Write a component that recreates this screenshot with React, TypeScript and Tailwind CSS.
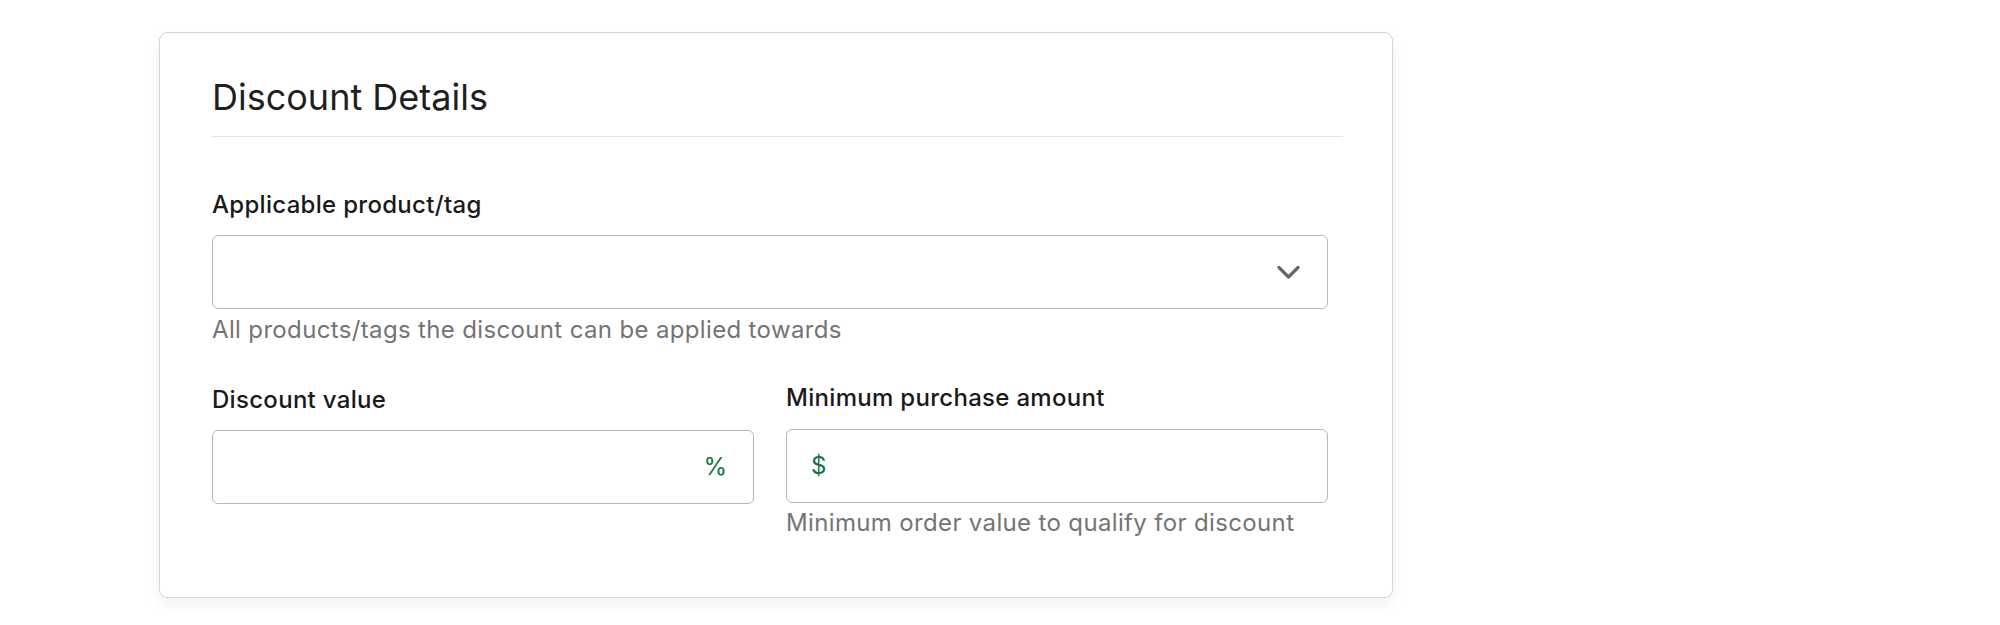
export default function App() {
  return (
    <main className="min-h-[625px] w-full bg-white font-['Inter','Liberation_Sans',sans-serif] pt-[32px] pl-[159px]">
      <section className="h-[566px] w-[1234px] rounded-[8px] border border-[#d6d6d6] bg-white pl-[52px] pr-[49px] pt-[42px] shadow-[0_6px_14px_rgba(0,0,0,0.06)]">
        <h2 className="border-b border-[#e2e2e2] pb-[17px] text-[36px] font-normal leading-[44px] text-[#1f1f1f]">
          Discount Details
        </h2>

        <div className="pr-[15px]">
          <label className="mt-[53px] block text-[24px] font-[450] leading-[29px] tracking-[0.3px] text-[#1a1a1a]">
            Applicable product/tag
          </label>
          <div className="mt-[16px] flex h-[74px] items-center justify-end rounded-[6px] border border-[#b8b8b8] pr-[27px]">
            <svg width="23" height="15" viewBox="0 0 23 15" fill="none">
              <path d="M2 2.5l9.5 9.5 9.5-9.5" stroke="#666666" strokeWidth="3.2" strokeLinecap="round" strokeLinejoin="round" />
            </svg>
          </div>
          <p className="mt-[6px] text-[24px] leading-[29px] tracking-[0.35px] text-[#747474]">
            All products/tags the discount can be applied towards
          </p>

          <div className="mt-[39px] grid grid-cols-2 gap-x-8">
            <div className="mt-[2px]">
              <label className="block text-[24px] font-[450] leading-[29px] tracking-[0.3px] text-[#1a1a1a]">
                Discount value
              </label>
              <div className="mt-[16px] flex h-[74px] items-center justify-end rounded-[6px] border border-[#b8b8b8] pr-[26px]">
                <span className="text-[24px] leading-none text-[#16704a]">%</span>
              </div>
            </div>
            <div>
              <label className="block text-[24px] font-[450] leading-[29px] tracking-[0.3px] text-[#1a1a1a]">
                Minimum purchase amount
              </label>
              <div className="mt-[17px] flex h-[74px] items-center rounded-[6px] border border-[#b8b8b8] pl-[24px]">
                <span className="text-[24px] leading-none text-[#16704a]">$</span>
              </div>
              <p className="mt-[5px] text-[24px] leading-[29px] tracking-[0.35px] text-[#747474]">
                Minimum order value to qualify for discount
              </p>
            </div>
          </div>
        </div>
      </section>
    </main>
  );
}
